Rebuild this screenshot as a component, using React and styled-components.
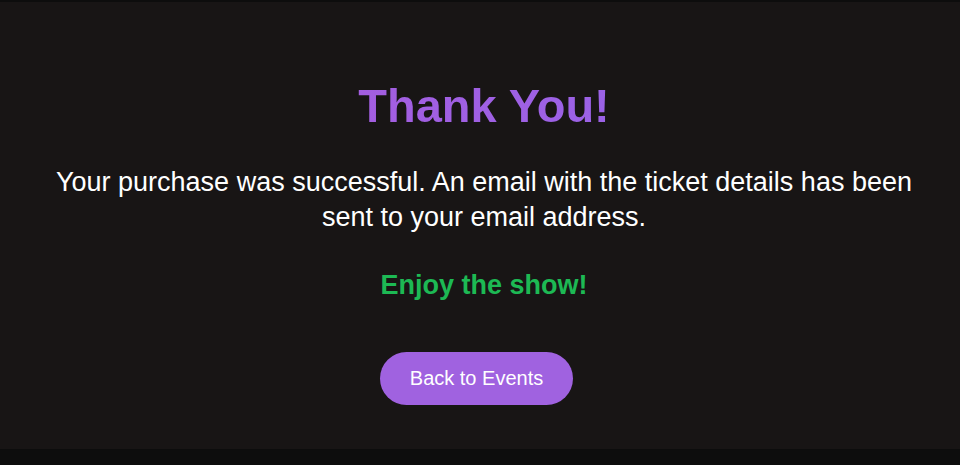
import styled, { createGlobalStyle } from "styled-components";

const GlobalStyle = createGlobalStyle`
  body {
    margin: 0;
    background: #0d0d0d;
    font-family: "Liberation Sans", Arial, sans-serif;
  }
`;

const App = () => {
  return (
    <>
      <GlobalStyle />
      <Page>
        <Section>
          <Title>Thank You!</Title>
          <Message>
            Your purchase was successful. An email with the ticket details has
            been sent to your email address.
          </Message>
          <Enjoy>Enjoy the show!</Enjoy>
          <BackButton>Back to Events</BackButton>
        </Section>
      </Page>
    </>
  );
};

export default App;

const Page = styled.div`
  padding-top: 2px;
`;
const Section = styled.section`
  height: 447px;
  box-sizing: border-box;
  background: #181515;
  display: flex;
  flex-direction: column;
  align-items: center;
  padding: 76px 36px 0 44px;
  text-align: center;
`;
const Title = styled.h1`
  margin: 0;
  font-size: 47px;
  font-weight: 700;
  background: linear-gradient(90deg, #a35ee0, #9b62e6);
  -webkit-background-clip: text;
  background-clip: text;
  color: transparent;
`;
const Message = styled.p`
  margin: 32px 0 0;
  font-size: 27px;
  line-height: 35px;
  color: #ffffff;
`;
const Enjoy = styled.p`
  margin: 35px 0 0;
  font-size: 27px;
  font-weight: 700;
  color: #1db954;
`;
const BackButton = styled.button`
  margin: 51px 15px 0 0;
  padding: 15px 30px;
  border: none;
  border-radius: 30px;
  background: #a062e0;
  color: #ffffff;
  font-family: inherit;
  font-size: 20px;
  line-height: 23px;
  cursor: pointer;
`;
